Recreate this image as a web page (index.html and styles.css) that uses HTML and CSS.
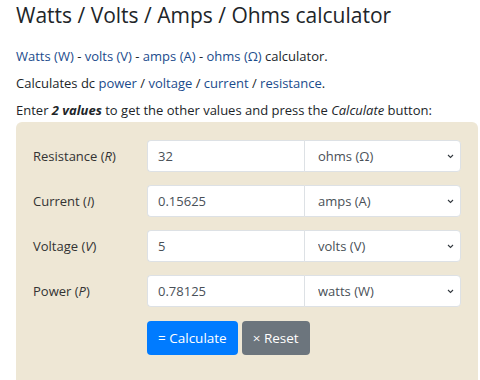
FILE: index.html
```html
<!DOCTYPE html>
<html lang="en">
<head>
  <meta charset="UTF-8" />
  <title>Watts / Volts / Amps / Ohms calculator</title>
  <link rel="stylesheet" href="styles.css">
</head>
<body>
  <div class="container">
    <h1>Watts / Volts / Amps / Ohms calculator</h1>
    <p><a href="#">Watts (W)</a> - <a href="#">volts (V)</a> - <a href="#">amps (A)</a> - <a href="#">ohms (&Omega;)</a> calculator.</p>
    <p>Calculates dc <a href="#">power</a> / <a href="#">voltage</a> / <a href="#">current</a> / <a href="#">resistance</a>.</p>
    <p class="intro">Enter <b><i>2 values</i></b> to get the other values and press the <i>Calculate</i> button:</p>

    <form class="calc">
      <div class="row">
        <label>Resistance (<i>R</i>)</label>
        <div class="input-group">
          <input type="text" value="32" />
          <select><option>ohms (&Omega;)</option></select>
        </div>
      </div>
      <div class="row">
        <label>Current (<i>I</i>)</label>
        <div class="input-group">
          <input type="text" value="0.15625" />
          <select><option>amps (A)</option></select>
        </div>
      </div>
      <div class="row">
        <label>Voltage (<i>V</i>)</label>
        <div class="input-group">
          <input type="text" value="5" />
          <select><option>volts (V)</option></select>
        </div>
      </div>
      <div class="row">
        <label>Power (<i>P</i>)</label>
        <div class="input-group">
          <input type="text" value="0.78125" />
          <select><option>watts (W)</option></select>
        </div>
      </div>
      <div class="row">
        <span></span>
        <div class="btn-group">
          <button type="button" class="btn btn-primary">= Calculate</button>
          <button type="button" class="btn btn-secondary">&times; Reset</button>
        </div>
      </div>
    </form>
  </div>
</body>
</html>
```

FILE: styles.css
```css
body {
  margin: 0;
  font-family: 'Open Sans', sans-serif;
  font-size: 13px;
  color: #212529;
  background: #fff;
}

.container {
  padding: 0 2px 0 16px;
}

h1 {
  font-size: 21px;
  font-weight: 400;
  margin: 0;
  line-height: 30px;
  margin-bottom: 17px;
}

p {
  margin: 0 0 8px;
  line-height: 19px;
}

p.intro {
  margin-bottom: 2px;
}

a {
  color: #1a4b8c;
  text-decoration: none;
}

.calc {
  background: #eee7d5;
  border-radius: 6px;
  padding: 18px 17px 40px;
}

.row {
  display: grid;
  grid-template-columns: 114px 314px;
  align-items: center;
  margin-bottom: 13px;
}

.row label {
  color: #333;
}

.input-group {
  display: flex;
  height: 32px;
}

.input-group input,
.input-group select {
  width: 50%;
  box-sizing: border-box;
  border: 1px solid #dde1e5;
  background: #fff;
  font-family: inherit;
  font-size: 13px;
  color: #495057;
  margin: 0;
}

.input-group input {
  padding: 0 10px;
  border-radius: 4px 0 0 4px;
  border-right: none;
}

.input-group select {
  appearance: none;
  padding: 0 13px;
  border-radius: 0 4px 4px 0;
  background-image: url("data:image/svg+xml,%3Csvg xmlns='http://www.w3.org/2000/svg' width='7' height='5' viewBox='0 0 7 5'%3E%3Cpath d='M1 1l2.5 2.5 2.5-2.5' fill='none' stroke='%23343a40' stroke-width='1.1'/%3E%3C/svg%3E");
  background-repeat: no-repeat;
  background-position: right 6px center;
}

.btn-group {
  display: flex;
  gap: 4px;
  margin-top: 1px;
}

.btn {
  height: 34px;
  border: none;
  border-radius: 4px;
  font-family: inherit;
  font-size: 13.5px;
  color: #fff;
  padding: 0 11px;
}

.btn-primary {
  background: #007bff;
}

.btn-secondary {
  background: #6c757d;
}
```
